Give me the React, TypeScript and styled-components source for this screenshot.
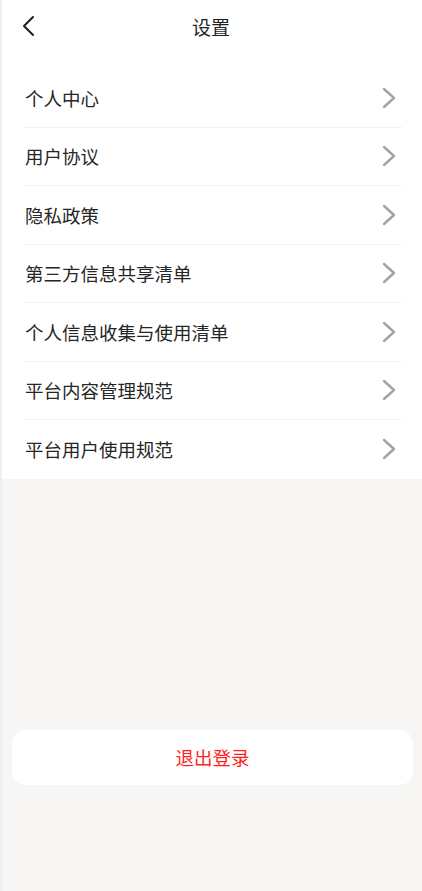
import React from "react";
import styled, { createGlobalStyle } from "styled-components";

const Global = createGlobalStyle`
  html, body { margin: 0; padding: 0; background: #f7f6f4; }
  body { font-family: "Noto Sans CJK SC", "Noto Sans", sans-serif; }
  * { box-sizing: border-box; }
`;

const Page = styled.div`
  width: 422px;
  min-height: 891px;
  background: #f7f6f4;
  border-left: 2px solid #efefef;
  display: flex;
  flex-direction: column;
`;

const Top = styled.div`
  background: #ffffff;
  display: flex;
  flex-direction: column;
`;

const Header = styled.div`
  height: 56px;
  position: relative;
  display: flex;
  align-items: center;
  justify-content: center;
  padding-bottom: 4px;
`;

const BackBtn = styled.div`
  position: absolute;
  left: 16px;
  top: 15px;
  width: 20px;
  height: 22px;
  display: flex;
  align-items: center;
  justify-content: center;
`;

const Title = styled.div`
  font-size: 19px;
  color: #1f1f1f;
  line-height: 1;
  margin-left: -2px;
`;

const List = styled.div`
  padding-top: 13px;
  display: flex;
  flex-direction: column;
`;

const Row = styled.div<{ $last?: boolean }>`
  height: 58.5px;
  margin: 0 20px 0 22px;
  padding: 0 6px 0 1px;
  display: flex;
  align-items: center;
  justify-content: space-between;
  border-bottom: ${(p) => (p.$last ? "none" : "1px solid #f3f1ee")};
`;

const Label = styled.span`
  font-size: 18.5px;
  color: #262626;
  line-height: 1;
`;

const Bottom = styled.div`
  flex: 1;
  display: flex;
  flex-direction: column;
  padding: 251px 9px 0 10px;
`;

const Logout = styled.div`
  height: 55px;
  background: #ffffff;
  border-radius: 14px;
  display: flex;
  align-items: center;
  justify-content: center;
  font-size: 18.5px;
  color: #ff1f1f;
`;

const items = [
  "个人中心",
  "用户协议",
  "隐私政策",
  "第三方信息共享清单",
  "个人信息收集与使用清单",
  "平台内容管理规范",
  "平台用户使用规范",
];

const Chevron = () => (
  <svg width="14" height="22" viewBox="0 0 14 22">
    <path d="M2 2 L12 11 L2 20" fill="none" stroke="#a3a3a3" strokeWidth="2.4" strokeLinecap="round" strokeLinejoin="round" />
  </svg>
);

export default function App() {
  return (
    <Page>
      <Global />
      <Top>
        <Header>
          <BackBtn>
            <svg width="14" height="22" viewBox="0 0 14 22">
              <path d="M12 2 L3 11 L12 20" fill="none" stroke="#1f1f1f" strokeWidth="2" strokeLinecap="round" strokeLinejoin="round" />
            </svg>
          </BackBtn>
          <Title>设置</Title>
        </Header>
        <List>
          {items.map((t, i) => (
            <Row key={t} $last={i === items.length - 1}>
              <Label>{t}</Label>
              <Chevron />
            </Row>
          ))}
        </List>
      </Top>
      <Bottom>
        <Logout>退出登录</Logout>
      </Bottom>
    </Page>
  );
}
